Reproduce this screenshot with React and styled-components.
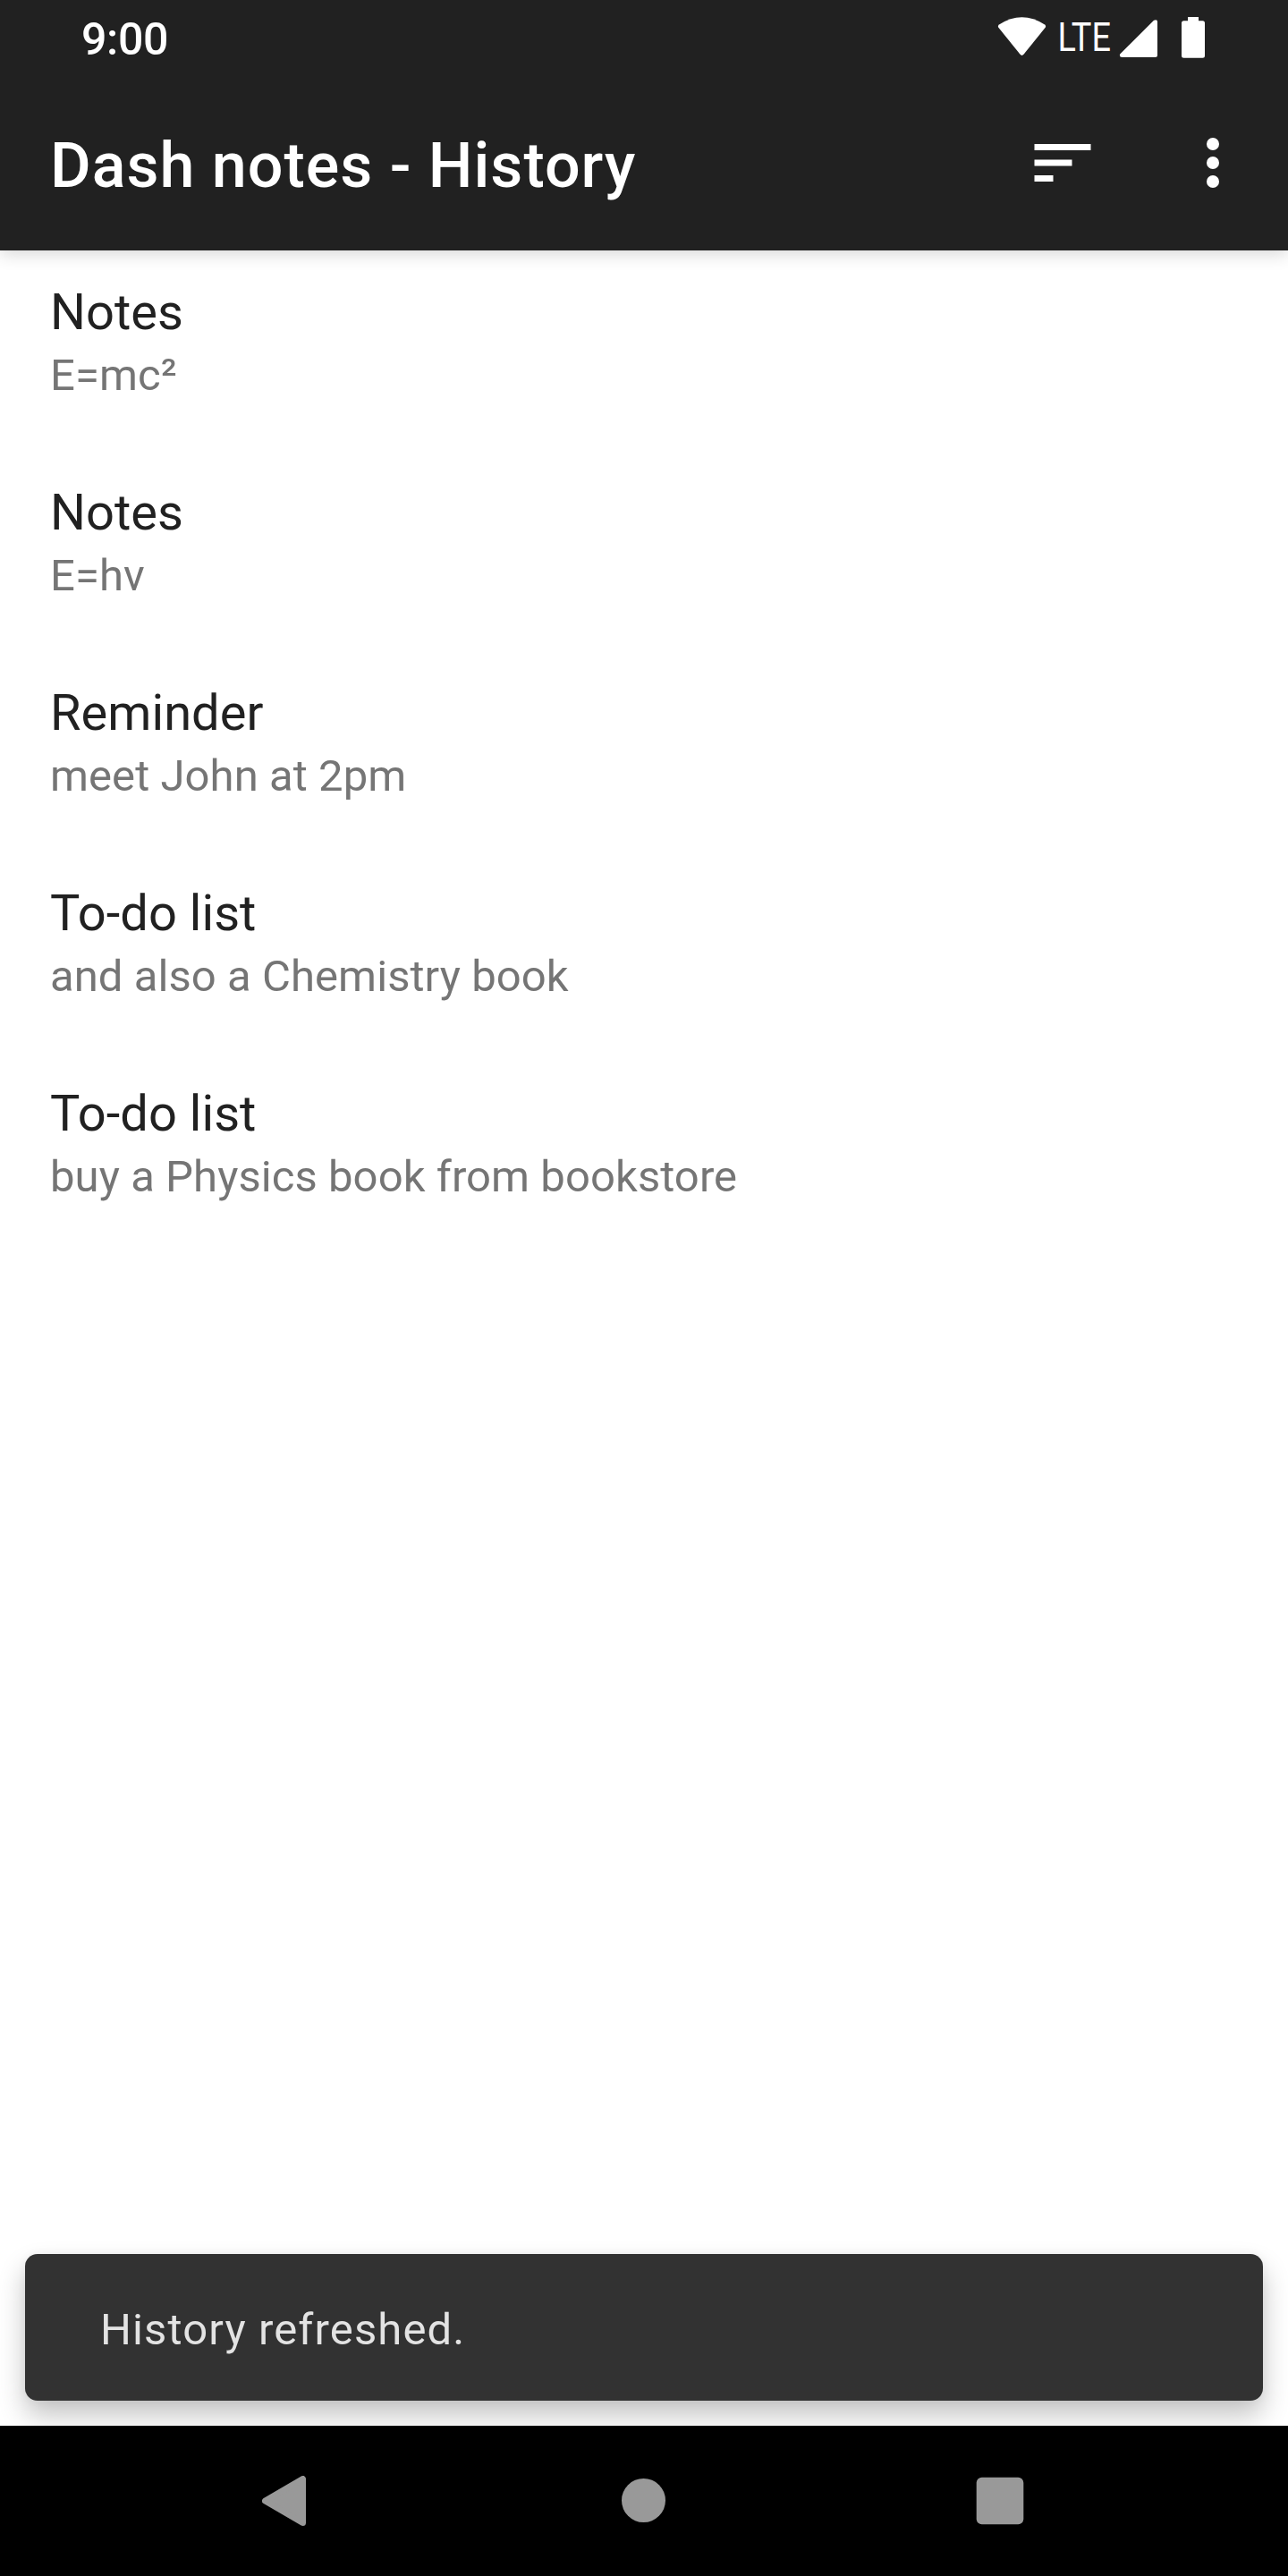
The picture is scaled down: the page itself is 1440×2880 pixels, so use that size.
import React from "react";
import styled, { createGlobalStyle } from "styled-components";

const Global = createGlobalStyle`
  * { box-sizing: border-box; }
  body { margin: 0; background: #fff; font-family: Roboto, "Noto Sans", sans-serif; }
`;

const Screen = styled.div`
  display: flex;
  flex-direction: column;
  width: 1440px;
  height: 2880px;
  overflow: hidden;
  background: #fff;
`;

const Header = styled.header`
  flex: none;
  background: #212121;
  color: #fff;
  z-index: 1;
  box-shadow: 0 4px 18px rgba(0, 0, 0, 0.16);
`;

const StatusBar = styled.div`
  display: flex;
  justify-content: space-between;
  height: 84px;
  padding: 15px 92px 0 91px;
`;

const Clock = styled.time`
  font-size: 50px;
  line-height: 58px;
  font-weight: 500;
  letter-spacing: -0.3px;
`;

const StatusIcons = styled.div`
  display: flex;
  height: 54px;
`;

const Network = styled.span`
  width: 69px;
  padding-left: 11.5px;
  font-size: 44px;
  line-height: 54px;
  transform: scaleX(0.86);
  transform-origin: 11.5px 0;
  white-space: nowrap;
`;

const AppBar = styled.div`
  display: flex;
  height: 196px;
  padding: 0 42px 0 56px;
`;

const Title = styled.h1`
  flex: 1;
  margin: 0;
  padding-top: 60px;
  font-size: 70px;
  line-height: 82px;
  font-weight: 500;
  letter-spacing: 1px;
`;

const IconButton = styled.button`
  display: flex;
  align-items: center;
  justify-content: center;
  width: 84px;
  height: 196px;
  margin-left: ${(p) => p.$gap || 0}px;
  padding: 0;
  border: 0;
  background: none;
  color: inherit;
`;

const NoteList = styled.ul`
  flex: 1;
  margin: 0;
  padding: 0;
  list-style: none;
`;

const NoteItem = styled.li`
  display: flex;
  flex-direction: column;
  gap: 9px;
  height: 224px;
  padding: 36px 56px 0;
`;

const NoteTitle = styled.span`
  font-size: 56px;
  line-height: 66px;
  letter-spacing: 0.05px;
  color: #212121;
`;

const NoteText = styled.span`
  font-size: 49px;
  line-height: 57px;
  letter-spacing: 0.07px;
  color: #757575;
`;

const Snackbar = styled.div`
  flex: none;
  height: 164px;
  margin: 0 28px 28px;
  padding: 56px 84px 0;
  border-radius: 14px;
  background: #323232;
  color: #e3e3e3;
  font-size: 49px;
  line-height: 57px;
  letter-spacing: 1.12px;
  box-shadow: 0 16px 30px rgba(0, 0, 0, 0.24), 0 0 12px rgba(0, 0, 0, 0.04);
`;

const NavBar = styled.nav`
  display: flex;
  justify-content: center;
  flex: none;
  height: 168px;
  padding-right: 1px;
  background: #000;
  color: #999;
  z-index: 1;
`;

const NavButton = styled.button`
  display: flex;
  align-items: center;
  justify-content: center;
  width: 398.5px;
  padding: 0;
  border: 0;
  background: none;
  color: inherit;
`;

const notes = [
  ["Notes", "E=mc²"],
  ["Notes", "E=hv"],
  ["Reminder", "meet John at 2pm"],
  ["To-do list", "and also a Chemistry book"],
  ["To-do list", "buy a Physics book from bookstore"],
];

const StatusGlyphs = () => (
  <StatusIcons>
    <svg width="56" height="54" viewBox="1115 15 56 54" fill="#fff">
      <path d="M1117 27.5Q1142.500 11 1168 27.500Q1170 29 1168.500 31L1144.500 60.800Q1142.500 63 1140.500 60.800L1116.500 31Q1115 29 1117 27.500Z" />
    </svg>
    <Network>LTE</Network>
    <svg width="108" height="54" viewBox="1240 15 108 54" fill="#fff">
      <path d="M1294 24.500V61.500Q1294 64 1291.500 64H1254.500Q1251 64 1252.200 60.500L1290 22.700Q1294 21 1294 24.500Z" />
      <path d="M1328 19H1340V23.300H1344.500Q1347 23.300 1347 25.800V62.200Q1347 64.700 1344.500 64.700H1323.500Q1321 64.700 1321 62.200V25.800Q1321 23.300 1323.500 23.300H1328Z" />
    </svg>
  </StatusIcons>
);

export default function App() {
  return (
    <Screen>
      <Global />
      <Header>
        <StatusBar>
          <Clock>9:00</Clock>
          <StatusGlyphs />
        </StatusBar>
        <AppBar>
          <Title>Dash notes - History</Title>
          <IconButton aria-label="Sort">
            <svg width="84" height="84" viewBox="0 0 24 24" fill="currentColor">
              <path d="M3 18h6v-2H3v2zM3 6v2h18V6H3zm0 7h12v-2H3v2z" />
            </svg>
          </IconButton>
          <IconButton aria-label="More options" $gap={84}>
            <svg width="84" height="84" viewBox="0 0 24 24" fill="currentColor">
              <circle cx="12" cy="6" r="2" />
              <circle cx="12" cy="12" r="2" />
              <circle cx="12" cy="18" r="2" />
            </svg>
          </IconButton>
        </AppBar>
      </Header>
      <NoteList>
        {notes.map(([title, text]) => (
          <NoteItem key={text}>
            <NoteTitle>{title}</NoteTitle>
            <NoteText>{text}</NoteText>
          </NoteItem>
        ))}
      </NoteList>
      <Snackbar role="status">History refreshed.</Snackbar>
      <NavBar>
        <NavButton aria-label="Back">
          <svg width="56" height="56" viewBox="0 0 56 56" fill="currentColor" stroke="currentColor" strokeWidth="7" strokeLinejoin="round">
            <path d="M45.500 3.500V52.500L3.500 28Z" />
          </svg>
        </NavButton>
        <NavButton aria-label="Home">
          <svg width="49" height="50" viewBox="0 0 49 50" fill="currentColor">
            <circle cx="24.500" cy="24.500" r="24.500" />
          </svg>
        </NavButton>
        <NavButton aria-label="Overview">
          <svg width="54" height="54" viewBox="0 0 54 54" fill="currentColor">
            <rect x="0.700" y="0.700" width="52.600" height="52.600" rx="6" />
          </svg>
        </NavButton>
      </NavBar>
    </Screen>
  );
}
